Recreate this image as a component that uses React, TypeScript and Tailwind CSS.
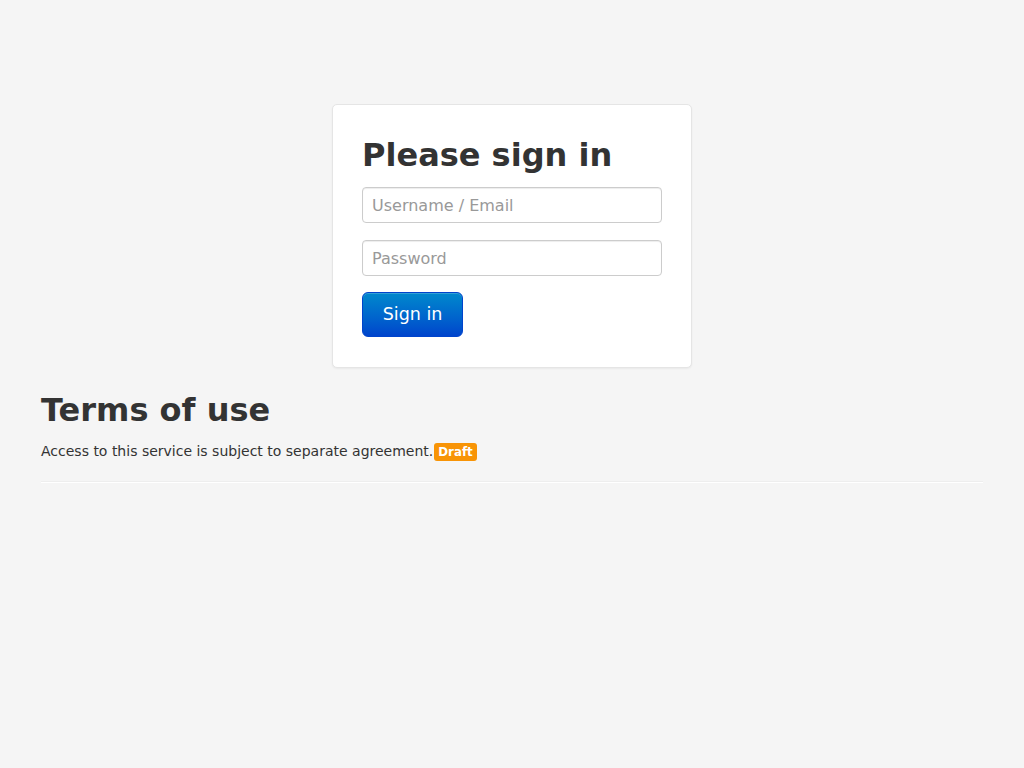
const App = () => {
  return (
    <div className="min-h-screen bg-[#f5f5f5] pt-[104px] text-[#333] font-['DejaVu_Sans',sans-serif]">
      <div className="mx-auto mb-[22px] w-[360px] rounded-[5px] border border-[#e5e5e5] bg-white px-[29px] pt-[19px] pb-[30px] shadow-[0_1px_2px_rgba(0,0,0,0.05)]">
        <h2 className="mt-[11px] mb-[12px] text-[32px] leading-[40px] font-bold">
          Please sign in
        </h2>
        <input
          type="text"
          placeholder="Username / Email"
          className="mb-[17px] block h-[36px] w-full rounded-[4px] border border-[#ccc] px-[9px] text-[16px] text-[#555] shadow-[inset_0_1px_1px_rgba(0,0,0,0.075)] outline-none placeholder:text-[#999]"
        />
        <input
          type="password"
          placeholder="Password"
          className="mb-[16px] block h-[36px] w-full rounded-[4px] border border-[#ccc] px-[9px] text-[16px] text-[#555] shadow-[inset_0_1px_1px_rgba(0,0,0,0.075)] outline-none placeholder:text-[#999]"
        />
        <button
          type="submit"
          className="block h-[45px] w-[101px] rounded-[6px] border border-[#0044cc] bg-gradient-to-b from-[#0088cc] to-[#0044cc] text-[17.5px] text-white shadow-[inset_0_1px_0_rgba(255,255,255,0.2)]"
        >
          Sign in
        </button>
      </div>

      <div className="mx-auto w-[942px]">
        <h2 className="mb-[11px] text-[32px] leading-[40px] font-bold">Terms of use</h2>
        <p className="text-[14px] leading-[20px]">
          Access to this service is subject to separate agreement.
          <span className="ml-[1px] rounded-[3px] bg-[#f89406] px-[4px] py-[2px] text-[11.844px] leading-[14px] font-bold text-white">
            Draft
          </span>
        </p>
        <hr className="mt-[20px] border-t border-b border-t-[#eee] border-b-white" />
      </div>
    </div>
  );
};

export default App;
